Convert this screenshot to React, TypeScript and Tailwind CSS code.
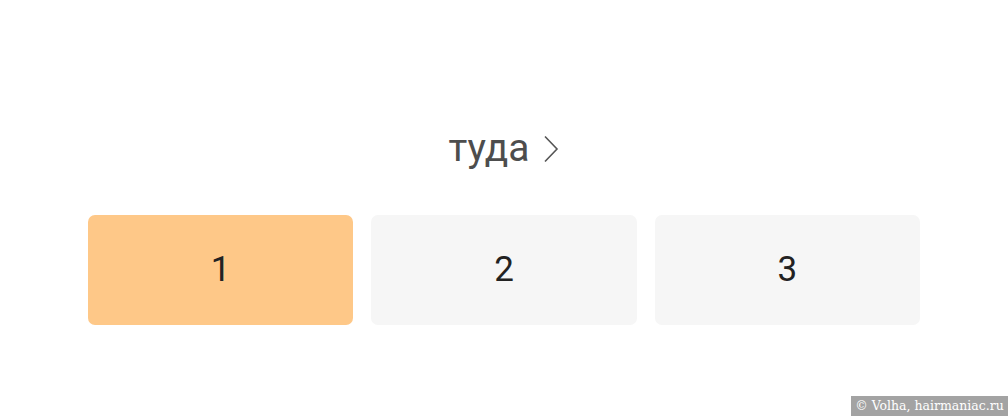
import React from "react";

export default function App() {
  return (
    <div className="relative w-[1008px] h-[416px] bg-white overflow-hidden" style={{ fontFamily: "Roboto, 'Noto Sans', sans-serif" }}>
      <div className="px-[88px] pt-[122px]">
        <div className="flex items-center justify-center gap-[12px] h-[52px]">
          <span className="text-[39px] leading-none text-[#4d4d4d]">туда</span>
          <svg width="18" height="28" viewBox="0 0 18 28" className="mt-[1px]">
            <path d="M3 1.5 L15 14 L3 26.5" fill="none" stroke="#555" strokeWidth="1.6" />
          </svg>
        </div>
        <div className="grid grid-cols-3 gap-[18px] mt-[41px]">
          <div className="h-[110px] rounded-[7px] bg-[#fec888] flex items-center justify-center text-[35px] text-[#222]">1</div>
          <div className="h-[110px] rounded-[7px] bg-[#f6f6f6] flex items-center justify-center text-[35px] text-[#222]">2</div>
          <div className="h-[110px] rounded-[7px] bg-[#f6f6f6] flex items-center justify-center text-[35px] text-[#222]">3</div>
        </div>
      </div>
      <div className="absolute right-0 bottom-0 h-[20px] w-[157px] bg-[#a3a3a3] flex items-center justify-center text-white text-[12.5px]" style={{ fontFamily: "'DejaVu Serif', 'Liberation Serif', serif" }}>
        © Volha, hairmaniac.ru
      </div>
    </div>
  );
}
